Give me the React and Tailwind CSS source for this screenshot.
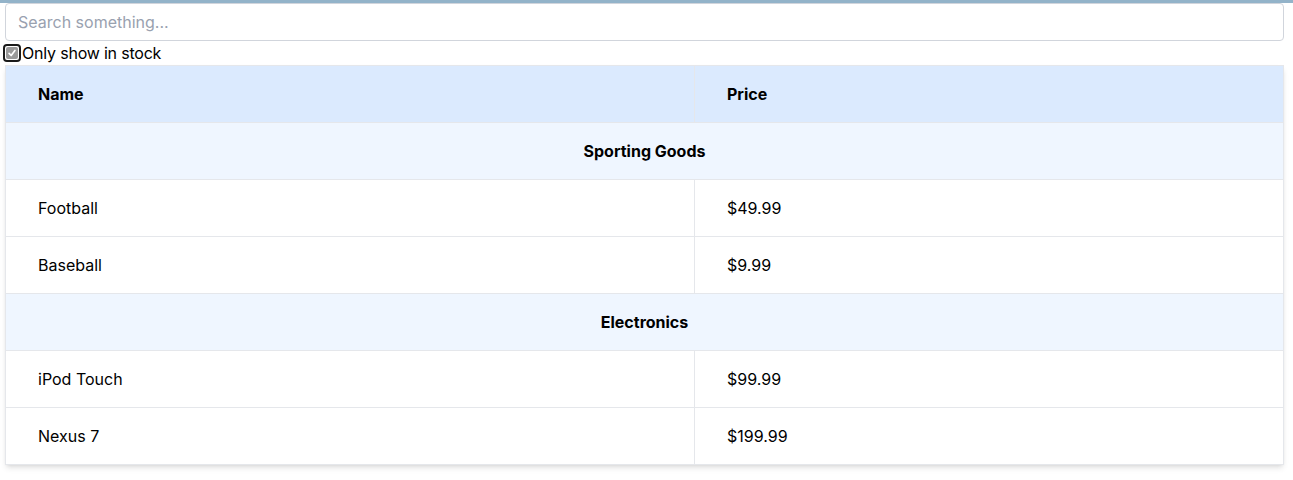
const PRODUCTS = [
  { category: 'Sporting Goods', price: '$49.99', stocked: true, name: 'Football' },
  { category: 'Sporting Goods', price: '$9.99', stocked: true, name: 'Baseball' },
  { category: 'Electronics', price: '$99.99', stocked: true, name: 'iPod Touch' },
  { category: 'Electronics', price: '$199.99', stocked: true, name: 'Nexus 7' },
];

function CategoryRow({ category }) {
  return (
    <tr className="bg-blue-50 border-b border-gray-200">
      <th colSpan={2} className="py-4 text-center font-bold">
        {category}
      </th>
    </tr>
  );
}

function ProductRow({ product }) {
  return (
    <tr className="bg-white border-b border-gray-200 last:border-b-0">
      <td className="px-8 py-4 border-r border-gray-200">{product.name}</td>
      <td className="px-8 py-4">{product.price}</td>
    </tr>
  );
}

export default function App() {
  const rows = [];
  let last = null;
  PRODUCTS.forEach((p) => {
    if (p.category !== last) {
      rows.push(<CategoryRow key={p.category} category={p.category} />);
      last = p.category;
    }
    rows.push(<ProductRow key={p.name} product={p} />);
  });

  return (
    <div className="min-h-screen bg-white text-black font-['Inter',sans-serif] text-base">
      <div className="h-[3px] bg-[#93b3c9]" />
      <div className="pl-[5px] pr-[9px]">
        <input
          type="text"
          placeholder="Search something..."
          className="block w-full h-[38px] px-3 border border-gray-300 rounded-[4px] text-base placeholder:text-gray-400 outline-none"
        />
        <label className="flex items-center h-6 -ml-[2px] gap-[1px] tracking-[-0.2px]">
          <span className="w-[18px] h-[18px] rounded-[4px] border-2 border-[#1a1a1a] p-[1px] bg-white flex">
            <span className="flex-1 rounded-[2px] bg-[#9a9a9a] flex items-center justify-center">
              <svg viewBox="0 0 12 12" className="w-[10px] h-[10px]" fill="none" stroke="white" strokeWidth="2" strokeLinecap="round" strokeLinejoin="round">
                <path d="M2.5 6.5 L5 9 L9.5 3" />
              </svg>
            </span>
          </span>
          <span>Only show in stock</span>
        </label>
        <table className="w-full border-collapse shadow-md border border-gray-200">
          <thead>
            <tr className="bg-blue-100 border-b border-gray-200">
              <th className="w-[689px] px-8 py-4 text-left font-bold border-r border-gray-200">Name</th>
              <th className="px-8 py-4 text-left font-bold">Price</th>
            </tr>
          </thead>
          <tbody>{rows}</tbody>
        </table>
      </div>
    </div>
  );
}
